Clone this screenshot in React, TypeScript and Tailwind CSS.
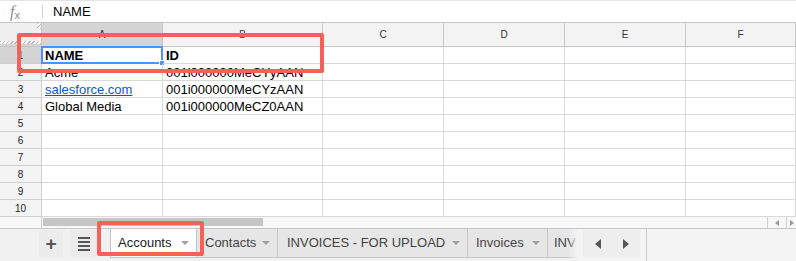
const colWidths = ["w-[121px]", "w-[160px]", "w-[121px]", "w-[121px]", "w-[121px]", "w-[110px]"];
const colLetters = ["A", "B", "C", "D", "E", "F"];

type Cell = { text: string; bold?: boolean; link?: boolean };

const rows: Cell[][] = [
  [{ text: "NAME", bold: true }, { text: "ID", bold: true }],
  [{ text: "Acme" }, { text: "001i000000MeCYyAAN" }],
  [{ text: "salesforce.com", link: true }, { text: "001i000000MeCYzAAN" }],
  [{ text: "Global Media" }, { text: "001i000000MeCZ0AAN" }],
  [], [], [], [], [], [],
];

const hatch =
  "bg-[repeating-linear-gradient(135deg,#b8b8b8_0px,#b8b8b8_1px,#f7f7f7_1px,#f7f7f7_3px)]";

const Caret = () => (
  <span className="w-0 h-0 border-l-[4px] border-r-[4px] border-t-[4px] border-l-transparent border-r-transparent border-t-[#a0a0a0]" />
);

const tabs = [
  { name: "Contacts", w: "w-[81px]", pl: "pl-[8px]" },
  { name: "INVOICES - FOR UPLOAD", w: "w-[190px]", pl: "pl-[9px]" },
  { name: "Invoices", w: "w-[80px]", pl: "pl-[8px]" },
];

export default function App() {
  return (
    <div className="relative w-[796px] h-[261px] overflow-hidden bg-white font-['Liberation_Sans',Arial,sans-serif] text-[13px] text-[#222]">
      {/* formula bar */}
      <div className="h-[22px] border-t border-[#e3e3e3] flex items-center">
        <div className="w-[42px] pl-[10px] flex items-end text-[#8c8c8c] font-['Liberation_Serif',serif] italic leading-none">
          <span className="text-[16px]">f</span>
          <span className="text-[11px] not-italic font-['Liberation_Sans',sans-serif] mb-[-1px]">x</span>
        </div>
        <div className="w-px h-[13px] bg-[#d0d0d0]" />
        <div className="ml-[10px] text-black">NAME</div>
      </div>

      {/* column headers */}
      <div className="flex border-t border-[#c6c6c6] bg-[#f3f3f3]">
        <div className="w-[42px] h-[24px] border-r border-b border-[#c6c6c6] flex flex-col">
          <div className="flex h-[18px]">
            <div className="flex-1 bg-[#efefef]" />
            <div className={`w-[4px] h-[6px] ${hatch}`} />
          </div>
          <div className={`h-[3px] ${hatch}`} />
          <div className="flex-1 bg-[#d4d4d4]" />
        </div>
        {colLetters.map((l, i) => (
          <div
            key={l}
            className={`${colWidths[i]} h-[24px] border-r border-b border-[#c6c6c6] flex items-center justify-center text-[10px] text-[#333] ${
              i === 0 ? "bg-[#d4d4d4]" : ""
            }`}
          >
            {l}
          </div>
        ))}
      </div>

      {/* rows */}
      {rows.map((r, ri) => (
        <div key={ri} className="flex">
          <div
            className={`w-[42px] h-[17px] border-r border-b border-[#d0d0d0] flex items-center justify-center text-[10px] text-[#222] ${
              ri === 0 ? "bg-[#d4d4d4]" : "bg-[#f3f3f3]"
            }`}
          >
            {ri + 1}
          </div>
          {colWidths.map((w, ci) => {
            const c = r[ci];
            return (
              <div
                key={ci}
                className={`relative ${w} h-[17px] border-r border-b border-[#d9d9d9] flex items-center pl-[3px] whitespace-nowrap leading-none`}
              >
                {c && (
                  <span
                    className={
                      c.link
                        ? "text-[#1155cc] underline"
                        : c.bold
                        ? "font-bold text-black"
                        : "text-black"
                    }
                  >
                    {c.text}
                  </span>
                )}
                {ri === 0 && ci === 0 && (
                  <div className="absolute left-[-1px] top-[-1px] w-[122px] h-[18px] border-2 border-[#4d90fe]">
                    <div className="absolute right-[-4px] bottom-[-4px] w-[6px] h-[6px] bg-[#4d90fe] border border-white" />
                  </div>
                )}
              </div>
            );
          })}
        </div>
      ))}

      {/* horizontal scrollbar */}
      <div className="flex h-[12px] border-b border-[#c6c6c6] bg-[#f8f8f8]">
        <div className="w-[42px] border-r border-[#d0d0d0]" />
        <div className="flex-1 pt-px pl-px">
          <div className="w-[220px] h-[8px] bg-[#c6c6c6]" />
        </div>
        <div className="w-[19px] border-l border-[#d0d0d0] flex items-center justify-center">
          <span className="w-0 h-0 border-t-[3px] border-b-[3px] border-r-[4px] border-t-transparent border-b-transparent border-r-[#999]" />
        </div>
        <div className="w-[10px] border-l border-[#d0d0d0] flex items-center justify-center">
          <span className="w-0 h-0 border-t-[3px] border-b-[3px] border-l-[4px] border-t-transparent border-b-transparent border-l-[#999]" />
        </div>
      </div>

      {/* sheet tabs */}
      <div className="flex h-[32px] bg-[#f1f1f1]">
        <div className="pl-[39px] flex items-start pt-px">
          <div className="w-[24px] h-[27px] bg-[#ececec] flex items-center justify-center text-[#555] text-[19px] font-bold leading-none">
            +
          </div>
          <div className="ml-[7px] w-[27px] h-[27px] bg-[#ececec] flex flex-col items-center justify-center gap-[2px]">
            <span className="w-[12px] h-[2px] bg-[#555]" />
            <span className="w-[12px] h-[2px] bg-[#555]" />
            <span className="w-[12px] h-[2px] bg-[#555]" />
            <span className="w-[12px] h-[2px] bg-[#555]" />
          </div>
        </div>

        <div className="relative ml-[13px] w-[468px] flex items-start overflow-hidden">
          <div className="w-[87px] h-[29px] shrink-0 bg-white border-l border-r border-b border-[#c6c6c6] pl-[7px] pr-[7px] flex items-center justify-between text-[#222]">
            <span>Accounts</span>
            <Caret />
          </div>
          {tabs.map((t) => (
            <div
              key={t.name}
              className={`${t.w} ${t.pl} h-[29px] shrink-0 bg-[#e6e6e6] border-r border-b border-[#c6c6c6] pr-[7px] flex items-center justify-between text-[#444] whitespace-nowrap`}
            >
              <span>{t.name}</span>
              <Caret />
            </div>
          ))}
          <div className="flex-1 h-[29px] bg-[#e6e6e6] border-b border-[#c6c6c6] pl-[6px] flex items-center text-[#444] whitespace-nowrap">
            INV
          </div>
          <div className="absolute right-0 top-0 w-[10px] h-[29px] bg-gradient-to-r from-transparent to-[#f4f4f4]" />
        </div>

        <div className="w-[69px] bg-[#f4f4f4] border-r border-[#d0d0d0] flex items-start pt-px pl-[5px]">
          <div className="w-[29px] h-[27px] bg-[#eeeeee] flex items-center justify-center">
            <span className="w-0 h-0 border-t-[5px] border-b-[5px] border-r-[6px] border-t-transparent border-b-transparent border-r-[#555]" />
          </div>
          <div className="w-[28px] h-[27px] bg-[#eeeeee] flex items-center justify-center">
            <span className="w-0 h-0 border-t-[5px] border-b-[5px] border-l-[6px] border-t-transparent border-b-transparent border-l-[#555]" />
          </div>
        </div>
        <div className="flex-1 bg-[#f4f4f4]" />
      </div>

      {/* annotation boxes */}
      <div className="absolute left-[17px] top-[33px] w-[307px] h-[40px] border-4 border-[#f3625a] rounded-[2px]" />
      <div className="absolute left-[97px] top-[221px] w-[107px] h-[35px] border-4 border-[#f3625a] rounded-[2px]" />
    </div>
  );
}
